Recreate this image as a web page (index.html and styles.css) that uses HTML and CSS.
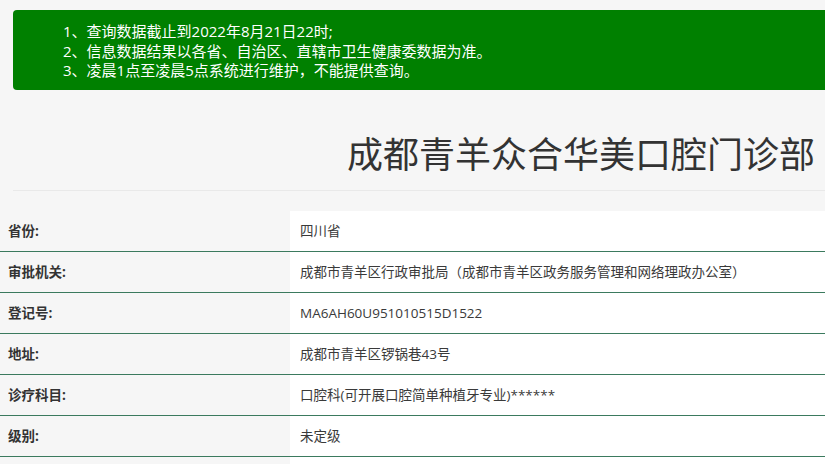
FILE: index.html
```html
<!DOCTYPE html>
<html lang="zh-CN">
<head>
<meta charset="utf-8">
<title>成都青羊众合华美口腔门诊部</title>
<link rel="stylesheet" href="styles.css">
</head>
<body>
<div class="notice">
  <p>1、查询数据截止到2022年8月21日22时;</p>
  <p>2、信息数据结果以各省、自治区、直辖市卫生健康委数据为准。</p>
  <p>3、凌晨1点至凌晨5点系统进行维护，不能提供查询。</p>
</div>
<div class="header">
  <h1 class="title">成都青羊众合华美口腔门诊部</h1>
</div>
<div class="info">
  <div class="row"><div class="label">省份:</div><div class="value">四川省</div></div>
  <div class="row"><div class="label">审批机关:</div><div class="value">成都市青羊区行政审批局（成都市青羊区政务服务管理和网络理政办公室）</div></div>
  <div class="row"><div class="label">登记号:</div><div class="value">MA6AH60U951010515D1522</div></div>
  <div class="row"><div class="label">地址:</div><div class="value">成都市青羊区锣锅巷43号</div></div>
  <div class="row"><div class="label">诊疗科目:</div><div class="value">口腔科(可开展口腔简单种植牙专业)******</div></div>
  <div class="row"><div class="label">级别:</div><div class="value">未定级</div></div>
  <div class="row row-empty"><div class="label"></div><div class="value"></div></div>
</div>
</body>
</html>
```

FILE: styles.css
```css
html, body {
  margin: 0;
  padding: 0;
}
body {
  background: #f6f6f6;
  color: #333;
  font-family: "Open Sans", "Noto Sans CJK SC", sans-serif;
  overflow: hidden;
}
.notice {
  margin: 10px 0 0 13px;
  height: 80px;
  box-sizing: border-box;
  padding: 12px 0 0 50px;
  background: #008000;
  border-radius: 4px 0 0 4px;
  color: #fff;
  font-size: 15px;
}
.notice p {
  margin: 0;
  line-height: 19.5px;
}
.header {
  margin-left: 13px;
  border-bottom: 1px solid #e9e9e9;
  padding: 45px 10px 15px 0;
  text-align: right;
}
.title {
  margin: 0;
  font-size: 36px;
  font-weight: normal;
  line-height: 40px;
  color: #333;
}
.info {
  margin-top: 20px;
  font-size: 13.5px;
}
.row {
  display: grid;
  grid-template-columns: 290px 1fr;
  border-bottom: 1px solid #3b7a5e;
}
.label {
  padding-left: 8px;
  line-height: 40px;
  font-weight: bold;
}
.value {
  padding-left: 10px;
  line-height: 40px;
  background: #fff;
  color: #3a3a3a;
}
.row-empty .label,
.row-empty .value {
  height: 40px;
}
```
